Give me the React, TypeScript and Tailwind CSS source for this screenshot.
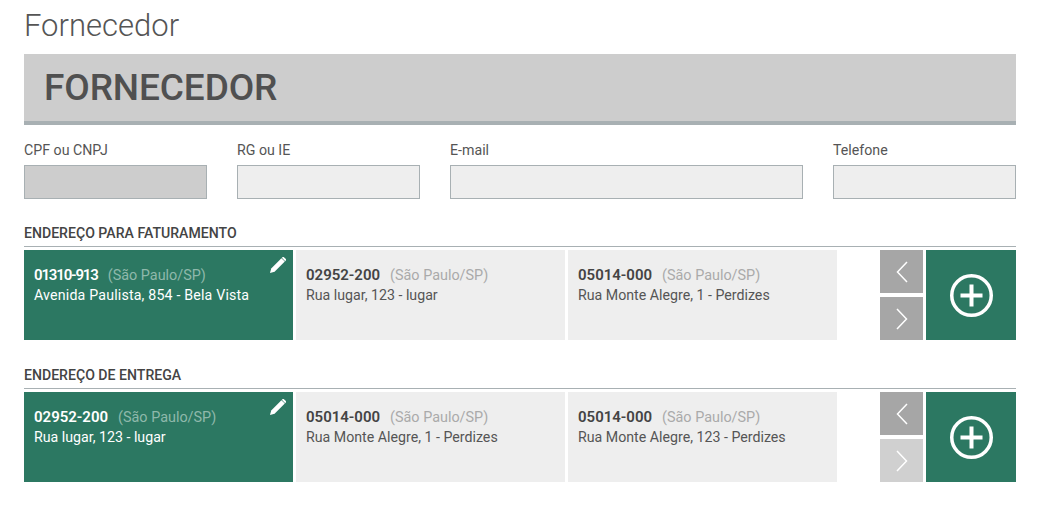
const FONT = "font-['Roboto',sans-serif]";

type Address = { cep: string; city: string; street: string; wide?: boolean };

function Field({ label, width, filled }: { label: string; width: string; filled?: boolean }) {
  return (
    <div className={`flex flex-col ${width}`}>
      <label className="h-[26px] pt-[1px] text-[14.2px] leading-[20px] text-[#555]">{label}</label>
      <div className={`h-[34px] border border-[#a8b0b3] ${filled ? "bg-[#cdcdcd]" : "bg-[#eee]"}`} />
    </div>
  );
}

function Card({ address, active }: { address: Address; active?: boolean }) {
  return (
    <div className={`relative h-[90px] w-[269px] px-[10px] pt-[15px] ${active ? "bg-[#2c7862]" : "bg-[#eee]"}`}>
      <div className="flex h-[20px] items-baseline leading-[20px]">
        <span className={`text-[15px] font-semibold ${address.wide ? "tracking-[-1.15px]" : ""} ${active ? "text-white" : "text-[#444]"}`}>
          {address.cep}
        </span>
        <span className={`ml-[10px] text-[14.4px] ${active ? "text-[#8fb8ab]" : "text-[#aaa]"}`}>({address.city})</span>
      </div>
      <div className={`text-[14.2px] leading-[20px] ${address.wide ? "tracking-[0.18px]" : ""} ${active ? "text-white" : "text-[#555]"}`}>
        {address.street}
      </div>
      {active && (
        <svg className="absolute right-[7px] top-[7px]" width="16" height="16" viewBox="0 0 16 16" fill="white">
          <path d="M0 16l1.2-4.6L11.4 1.2l3.4 3.4L4.6 14.8z" />
          <path d="M12.2.4a1.4 1.4 0 0 1 2 0l1.4 1.4a1.4 1.4 0 0 1 0 2l-.4.4-3.4-3.4z" />
        </svg>
      )}
    </div>
  );
}

function Arrow({ dir, disabled }: { dir: "left" | "right"; disabled?: boolean }) {
  return (
    <button className={`flex h-[43px] w-[43px] items-center justify-center ${disabled ? "bg-[#d0d0d0]" : "bg-[#a6a6a6]"}`}>
      <svg width="12" height="22" viewBox="0 0 12 22" fill="none" stroke="white" strokeWidth="1.5">
        {dir === "left" ? <path d="M11 1 1.5 11 11 21" /> : <path d="M1 1l9.5 10L1 21" />}
      </svg>
    </button>
  );
}

function Section({ title, cards, nextDisabled }: { title: string; cards: Address[]; nextDisabled?: boolean }) {
  return (
    <section>
      <h3 className="h-[26px] border-b border-[#a8b0b3] text-[14.1px] font-medium leading-[24px] text-[#444]">{title}</h3>
      <div className="mt-[3px] flex">
        <div className="flex gap-[3px]">
          {cards.map((c, i) => (
            <Card key={i} address={c} active={i === 0} />
          ))}
        </div>
        <div className="ml-[43px] flex flex-col justify-between">
          <Arrow dir="left" />
          <Arrow dir="right" disabled={nextDisabled} />
        </div>
        <button className="ml-[3px] flex h-[90px] w-[90px] items-center justify-center bg-[#2c7862]">
          <svg width="43" height="43" viewBox="0 0 43 43" fill="none" stroke="white" strokeWidth="3.5">
            <circle cx="21.5" cy="21.5" r="19.75" />
            <path strokeWidth="4" d="M21.5 10.5v22M10.5 21.5h22" />
          </svg>
        </button>
      </div>
    </section>
  );
}

export default function App() {
  return (
    <div className={`min-h-[507px] w-full bg-white pl-[24px] ${FONT}`}>
      <div className="w-[992px]">
        <h1 className="h-[54px] pt-[8px] text-[31px] font-light leading-[36px] text-[#555]">Fornecedor</h1>
        <div className="flex h-[71px] items-center border-b-4 border-[#a8b0b3] bg-[#cdcdcd] pl-[20px]">
          <h2 className="text-[37px] font-medium leading-[44px] tracking-[-0.1px] text-[#505050]">FORNECEDOR</h2>
        </div>
        <div className="mt-[14px] flex gap-[30px]">
          <Field label="CPF ou CNPJ" width="w-[183px]" filled />
          <Field label="RG ou IE" width="w-[183px]" />
          <Field label="E-mail" width="w-[353px]" />
          <Field label="Telefone" width="w-[183px]" />
        </div>
        <div className="mt-[22px]">
          <Section
            title="ENDEREÇO PARA FATURAMENTO"
            cards={[
              { cep: "01310-913", city: "São Paulo/SP", street: "Avenida Paulista, 854 - Bela Vista", wide: true },
              { cep: "02952-200", city: "São Paulo/SP", street: "Rua lugar, 123 - lugar" },
              { cep: "05014-000", city: "São Paulo/SP", street: "Rua Monte Alegre, 1 - Perdizes" },
            ]}
          />
        </div>
        <div className="mt-[23px]">
          <Section
            title="ENDEREÇO DE ENTREGA"
            nextDisabled
            cards={[
              { cep: "02952-200", city: "São Paulo/SP", street: "Rua lugar, 123 - lugar" },
              { cep: "05014-000", city: "São Paulo/SP", street: "Rua Monte Alegre, 1 - Perdizes" },
              { cep: "05014-000", city: "São Paulo/SP", street: "Rua Monte Alegre, 123 - Perdizes" },
            ]}
          />
        </div>
      </div>
    </div>
  );
}
